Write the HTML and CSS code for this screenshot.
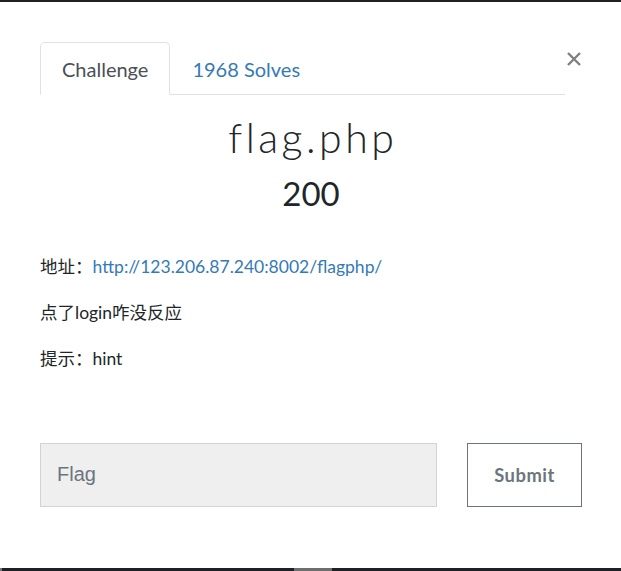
FILE: index.html
```html
<!DOCTYPE html>
<html lang="zh">
<head>
<meta charset="utf-8">
<title>flag.php</title>
<link rel="stylesheet" href="styles.css">
</head>
<body>
<div class="topbar"></div>
<div class="modal">
  <div class="header">
    <ul class="tabs">
      <li class="tab active">Challenge</li>
      <li class="tab link">1968 Solves</li>
    </ul>
    <button class="close" type="button" aria-label="Close">
      <svg width="16" height="16" viewBox="0 0 16 16"><path d="M2 2 L14 14 M14 2 L2 14" stroke="#808080" stroke-width="2.4" stroke-linecap="butt"/></svg>
    </button>
  </div>
  <h2 class="title">flag.php</h2>
  <h4 class="value">200</h4>
  <div class="desc">
    <p>地址：<a href="#">http://123.206.87.240:8002/flagphp/</a></p>
    <p>点了login咋没反应</p>
    <p>提示：hint</p>
  </div>
  <div class="form">
    <input class="flag" type="text" placeholder="Flag">
    <button class="submit" type="button">Submit</button>
  </div>
</div>
<div class="bottombar"><span class="edge"></span><span class="thumb"></span></div>
</body>
</html>
```
FILE: styles.css
```css
html, body {
  margin: 0;
  padding: 0;
  height: 100%;
}
body {
  display: flex;
  flex-direction: column;
  background: #fff;
  font-family: "Lato", "Noto Sans CJK SC", sans-serif;
  font-size: 17.5px;
  color: #212529;
}
.topbar {
  height: 2px;
  background: #1d2024;
  flex: none;
}
.modal {
  flex: 1;
  padding: 40px 39px 0 40px;
}
.header {
  display: flex;
  align-items: flex-start;
  justify-content: space-between;
}
.tabs {
  list-style: none;
  margin: 0;
  padding: 0;
  display: flex;
  width: 525px;
  border-bottom: 1px solid #dee2e6;
}
.tab {
  padding: 13px 21px 12px;
  font-size: 20px;
  line-height: 26px;
  border: 1px solid transparent;
  border-top-left-radius: 5px;
  border-top-right-radius: 5px;
  margin-bottom: -1px;
  color: #495057;
}
.tab.active {
  border-color: #dee2e6 #dee2e6 #fff;
  background: #fff;
}
.tab.link {
  color: #337ab7;
}
.close {
  background: none;
  border: 0;
  padding: 0;
  margin: 9px 0 0;
  width: 16px;
  height: 16px;
  display: flex;
}
.title {
  margin: 18px 0 0;
  padding-left: 3.5px;
  text-align: center;
  font-family: "Lato", sans-serif;
  font-weight: 300;
  font-size: 41px;
  line-height: 50px;
  letter-spacing: 3.5px;
  color: #212529;
}
.value {
  margin: 10px 0 0;
  text-align: center;
  font-weight: 400;
  font-size: 33px;
  line-height: 40px;
}
.desc {
  margin-top: 40px;
}
.desc p {
  margin: 0 0 18.4px;
  line-height: 27.6px;
}
.desc a {
  color: #337ab7;
  text-decoration: none;
}
.form {
  display: flex;
  gap: 30px;
  margin-top: 70px;
}
.flag {
  width: 397px;
  height: 64px;
  box-sizing: border-box;
  background: #efefef;
  border: 1px solid #d3d3d3;
  padding: 0 16px;
  font-family: "Liberation Sans", sans-serif;
  font-size: 20px;
  color: #495057;
}
.flag::placeholder {
  color: #6c757d;
}
.submit {
  width: 115px;
  height: 64px;
  box-sizing: border-box;
  background: #fff;
  border: 1px solid #6c757d;
  font-family: "Lato", sans-serif;
  font-weight: 700;
  font-size: 18.4px;
  color: #6c757d;
  letter-spacing: 0.5px;
}
.bottombar {
  flex: none;
  height: 3px;
  background: #1d2024;
  position: relative;
}
.edge {
  position: absolute;
  left: 0;
  width: 2px;
  top: 0;
  bottom: 0;
  background: #777;
}
.thumb {
  position: absolute;
  left: 294px;
  width: 38px;
  top: 0;
  bottom: 0;
  background: #6e6e6e;
}
```
